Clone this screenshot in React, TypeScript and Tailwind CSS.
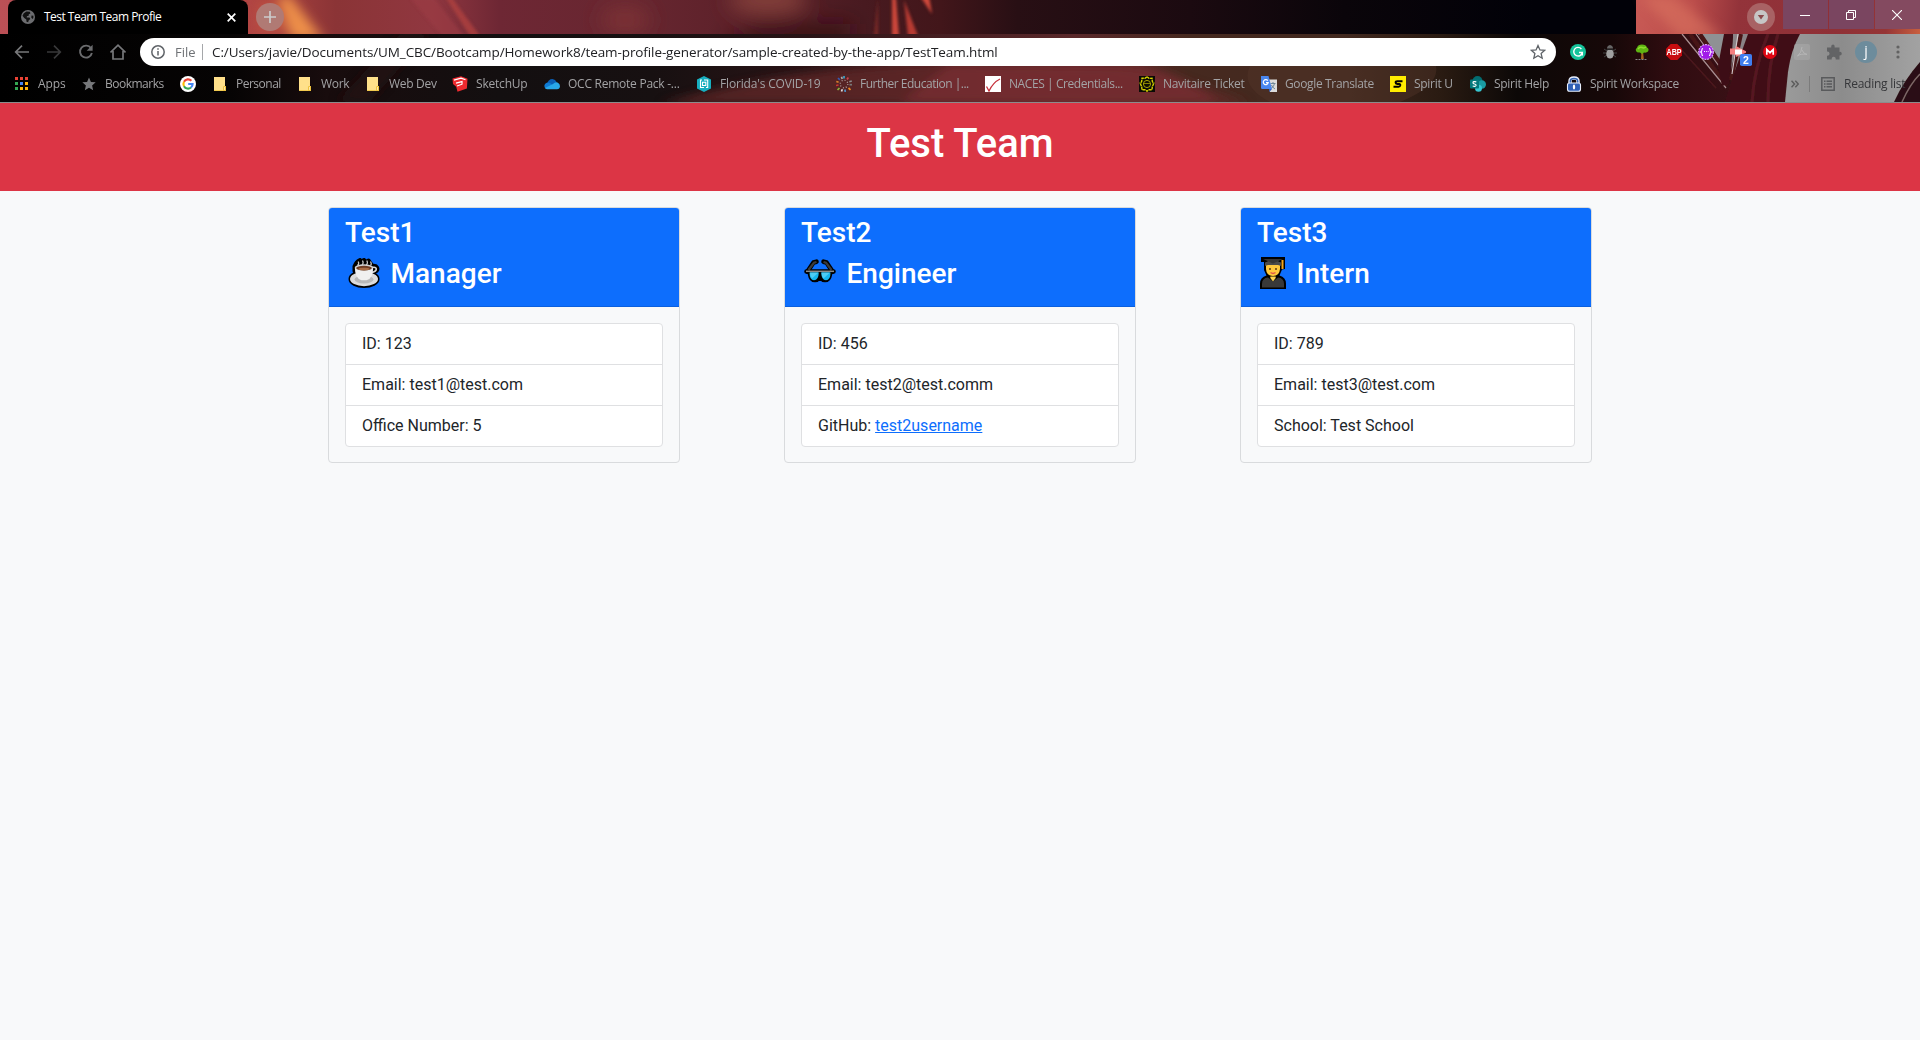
import React from "react";

const UI_FONT = "font-['Open_Sans','Noto_Sans',sans-serif]";

/* ---------- browser theme artwork ---------- */

function StripArt() {
  return (
    <svg className="absolute inset-0" width="1920" height="34" viewBox="0 0 1920 34" preserveAspectRatio="none" aria-hidden="true">
      <defs>
        <linearGradient id="strip" x1="0" x2="1920" y1="0" y2="0" gradientUnits="userSpaceOnUse">
          <stop offset="0" stopColor="#bb5056" />
          <stop offset="0.13" stopColor="#b04442" />
          <stop offset="0.175" stopColor="#8b3436" />
          <stop offset="0.225" stopColor="#903740" />
          <stop offset="0.26" stopColor="#6e2734" />
          <stop offset="0.33" stopColor="#672630" />
          <stop offset="0.4" stopColor="#5a2028" />
          <stop offset="0.45" stopColor="#481a20" />
          <stop offset="0.49" stopColor="#42161a" />
          <stop offset="0.53" stopColor="#280f14" />
          <stop offset="0.62" stopColor="#1b0a10" />
          <stop offset="0.7" stopColor="#0a050a" />
          <stop offset="0.8" stopColor="#010108" />
        </linearGradient>
        <linearGradient id="stripRight" x1="1636" x2="1920" y1="0" y2="34" gradientUnits="userSpaceOnUse">
          <stop offset="0" stopColor="#c85a55" />
          <stop offset="0.2" stopColor="#bb4d4b" />
          <stop offset="0.36" stopColor="#93333a" />
          <stop offset="0.7" stopColor="#8f3036" />
          <stop offset="0.88" stopColor="#953536" />
          <stop offset="1" stopColor="#c9603f" />
        </linearGradient>
        <filter id="b2" x="-50%" y="-50%" width="200%" height="200%"><feGaussianBlur stdDeviation="1.6" /></filter>
        <filter id="b5" x="-50%" y="-100%" width="200%" height="300%"><feGaussianBlur stdDeviation="6" /></filter>
        <filter id="b9" x="-50%" y="-200%" width="200%" height="500%"><feGaussianBlur stdDeviation="10" /></filter>
      </defs>
      <rect width="1920" height="34" fill="url(#strip)" />
      <g filter="url(#b5)">
        <path d="M278-4 290-4 324 40H292Z" fill="#ee9048" />
        <path d="M258 0h22l8 34h-32Z" fill="#c45442" opacity=".7" />
      </g>
      <g filter="url(#b9)">
        <ellipse cx="768" cy="0" rx="40" ry="14" fill="#84403a" />
        <ellipse cx="625" cy="20" rx="24" ry="14" fill="#7c3234" />
        <path d="M720 44l40-20h90v20Z" fill="#371018" />
      </g>
      <g filter="url(#b2)">
        <path d="M410-2h24l30 38h-22Z" fill="#9c3b42" opacity=".6" />
        <path d="M446-2h6l28 38h-10Z" fill="#b5443f" opacity=".7" />
        <path d="M892-2h4l3 38h-7Z" fill="#cc473b" />
        <path d="M904 0l14 36h-10Z" fill="#b83a32" />
        <path d="M920-4h9l3 18Z" fill="#d0483a" />
        <path d="M878-2l-4 38h4Z" fill="#7a2a28" />
      </g>
      <rect x="1636" width="284" height="34" fill="url(#stripRight)" />
      <path d="M1640-4h34l50 42h-44Z" fill="#dc7560" opacity=".6" filter="url(#b5)" />
    </svg>
  );
}

function ToolbarArt() {
  return (
    <svg className="absolute inset-0" width="1920" height="68" viewBox="0 34 1920 68" preserveAspectRatio="none" aria-hidden="true">
      <defs>
        <linearGradient id="bar" x1="0" x2="1920" y1="0" y2="0" gradientUnits="userSpaceOnUse">
          <stop offset="0" stopColor="#000" />
          <stop offset="0.12" stopColor="#060404" />
          <stop offset="0.17" stopColor="#180c0d" />
          <stop offset="0.26" stopColor="#130f10" />
          <stop offset="0.34" stopColor="#171011" />
          <stop offset="0.42" stopColor="#291416" />
          <stop offset="0.48" stopColor="#431d20" />
          <stop offset="0.56" stopColor="#5a282a" />
          <stop offset="0.62" stopColor="#46291f" />
          <stop offset="0.7" stopColor="#42291f" />
          <stop offset="0.75" stopColor="#2a1b12" />
          <stop offset="0.79" stopColor="#0c0807" />
          <stop offset="0.84" stopColor="#170808" />
          <stop offset="0.87" stopColor="#300c10" />
          <stop offset="0.93" stopColor="#40141a" />
        </linearGradient>
        <linearGradient id="silver" x1="1790" x2="1920" y1="0" y2="0" gradientUnits="userSpaceOnUse">
          <stop offset="0" stopColor="#999" />
          <stop offset="0.4" stopColor="#8c8c8c" />
          <stop offset="1" stopColor="#a2a2a2" />
        </linearGradient>
        <filter id="t1" x="-20%" y="-20%" width="140%" height="140%"><feGaussianBlur stdDeviation="0.7" /></filter>
        <filter id="t5" x="-20%" y="-50%" width="140%" height="200%"><feGaussianBlur stdDeviation="5" /></filter>
      </defs>
      <rect y="34" width="1920" height="68" fill="url(#bar)" />
      <g filter="url(#t5)">
        <path d="M660 104q140-40 300-42l160 6q80 14 130 36Z" fill="#63282a" opacity=".75" />
        <path d="M950 64h190q50 14 80 40H900Z" fill="#7a2e31" opacity=".75" />
        <path d="M400 34h30l-60 68h-34Z" fill="#2b0f10" opacity=".5" />
      </g>
      <path d="M1250 66q-10 20 20 36h130q40-16 36-36Z" fill="#54382b" opacity=".4" />
      <g filter="url(#t1)">
        <path d="M1698 34h28l-4 32Z" fill="#8f9194" />
        <path d="M1733 34h16l-13 42-5-2Z" fill="#8a8386" />
        <path d="M1690 34l36 52M1700 34l30 44" stroke="#471318" strokeWidth="4" fill="none" />
        <path d="M1682 34l44 54M1696 34l30 42" stroke="#a88f91" strokeWidth="1.200" fill="none" />
        <path d="M1724 34h9l-4 50-7 2-4-20Z" fill="#3d0f14" />
        <path d="M1741 34l-10 46" stroke="#4a1519" strokeWidth="4" />
        <path d="M1738 34l-6 40" stroke="#d5cccd" strokeWidth="1.100" />
        <path d="M1748 34h52q-14 24-15 68h-60l8-26Z" fill="#401117" />
        <path d="M1768 34q-14 34-16 68M1778 34q-10 30-10 68" stroke="#561920" strokeWidth="3" fill="none" />
        <path d="M1676 44l40 44" stroke="#4c191d" strokeWidth="1.500" />
      </g>
      <path d="M1800 34q-9 16-12 38l-3 30h135V34Z" fill="url(#silver)" filter="url(#t1)" />
      <g filter="url(#t1)">
        <path d="M1894 102q10-22 26-40v40Z" fill="#2a1113" />
        <path d="M1902 102q8-18 18-28" stroke="#7d6668" strokeWidth="1.500" fill="none" />
      </g>
    </svg>
  );
}

/* ---------- small icons ---------- */

const Globe = () => (
  <svg width="14" height="14" viewBox="0 0 14 14">
    <circle cx="7" cy="7" r="7" fill="#6c6d70" />
    <path d="M5.5 1.6l3.4.2.5 1.6-1.7.9.2 1.3-2 .6-.2 1.2h2.8l.8 1.5-1.7 1.6-.4 1.8-1.7-.6-.2-2.3L3.2 8 1.5 5.8Q2.2 3 5.5 1.6Z" fill="#111" />
    <path d="M10.500 5.600l1.900.2q.3 2-.6 3.200l-1.500-1.200Z" fill="#111" />
  </svg>
);

const Star = ({ fill, stroke, size }: { fill: string; stroke: string; size: number }) => (
  <svg width={size} height={size} viewBox="0 0 16 16">
    <path d="M8 1.500l1.950 4.400 4.750.450-3.600 3.150 1.080 4.700L8 11.700l-4.180 2.500 1.080-4.700L1.300 6.350l4.750-.45Z" fill={fill} stroke={stroke} strokeWidth="1.300" strokeLinejoin="miter" />
  </svg>
);

const AppsIcon = () => (
  <svg width="16" height="16" viewBox="0 0 16 16">
    <path d="M1 1h3v3H1zM6 1h3v3H6zM11 1h3v3h-3z" fill="#ea4335" />
    <path d="M1 6h3v3H1zM1 11h3v3H1z" fill="#34a853" />
    <path d="M6 6h3v3H6z" fill="#4285f4" />
    <path d="M11 6h3v3h-3zM6 11h3v3H6zM11 11h3v3h-3z" fill="#fbb50b" />
  </svg>
);

const GoogleIcon = () => (
  <svg width="16" height="16" viewBox="0 0 16 16">
    <circle cx="8" cy="8" r="8" fill="#fff" />
    <g fill="none" strokeWidth="2.100">
      <path d="M11.400 4.800A4.600 4.600 0 0 0 4 5.800" stroke="#ea4335" />
      <path d="M4 5.800a4.600 4.600 0 0 0 0 4.400" stroke="#fbbc05" />
      <path d="M4 10.200a4.600 4.600 0 0 0 7 1.300" stroke="#34a853" />
      <path d="M8.200 8h4.400q0 2.300-1.600 3.500" stroke="#4285f4" />
    </g>
  </svg>
);

const Folder = () => (
  <svg width="16" height="16" viewBox="0 0 16 16">
    <path d="M2 1h11v9h1v5H2Z" fill="#ffe08a" />
    <path d="M11 14.500v-3.200q0-1.300 1.400-1.300H14v5H2v-.7h8.500" fill="#eec23e" />
    <path d="M12 11h1v3h-1z" fill="#ffe9ab" />
  </svg>
);

const SketchUp = () => (
  <svg width="16" height="16" viewBox="0 0 16 16">
    <path d="M.5 2.500L9 .3l6.500 2.500-.6 9.700-9.400 3.200-1.300-5L1 8Z" fill="#ee2a2f" />
    <path d="M2 4.200l7-2 4.500 1.500M4 7.200L10 5.600v2.600l-5 1.800" stroke="#fff" strokeWidth="1.200" fill="none" />
  </svg>
);

const OneDrive = () => (
  <svg width="16" height="16" viewBox="0 0 16 16">
    <path d="M3 8.500Q4 3 8.500 3q3 .2 4.200 3.200L8 10Z" fill="#0a5fb6" />
    <path d="M1 12.200Q-.6 9 1.800 7.200 4 5.800 6.400 7.300L12 12Z" fill="#0f7bd4" />
    <path d="M9 8q2.200-2.200 4.500-1.500Q16 7.500 16 10.200 15.800 13 13 13.200H3Q1.500 13 1 12Z" fill="#28a8ea" />
  </svg>
);

const Covid = () => (
  <svg width="16" height="16" viewBox="0 0 16 16">
    <path d="M8 0l7 3.500v9L8 16l-7-3.500v-9Z" fill="#17aebf" />
    <path d="M6 4H4.500v7.500H8M6.500 6.200v3.300h3.300V6.200ZM8 4h3.700v7.500H10" stroke="#fff" strokeWidth="1.100" fill="none" />
  </svg>
);

const Burst = () => (
  <svg width="16" height="16" viewBox="0 0 16 16" strokeWidth="1.700">
    <path d="M8 0v2.500" stroke="#38a6cf" /><path d="M12.300 1.500l-1.300 1.900" stroke="#c9424a" />
    <path d="M15.800 5l-2.500.8" stroke="#8d8d8d" /><path d="M16 8.700h-2.500" stroke="#777" />
    <path d="M14.500 13.800l-2-1.800" stroke="#ef8b22" /><path d="M9.300 16l-.4-2.500" stroke="#4e93c7" />
    <path d="M5.500 15.500l.8-2.300" stroke="#ddd" /><path d="M1.500 14l2-2" stroke="#8bb43a" />
    <path d="M0 9.500l2.500-.5" stroke="#c33" /><path d="M.3 5.500l2.300.7" stroke="#d9822b" />
    <path d="M2 2l1.900 1.900" stroke="#3558b0" /><path d="M5.500.7l.7 2.300" stroke="#aaa" />
    <circle cx="8" cy="8" r="3.800" stroke="#b5a5a5" strokeDasharray="1 2" strokeWidth="1.200" fill="none" />
  </svg>
);

const Naces = () => (
  <svg width="16" height="16" viewBox="0 0 16 16">
    <path d="M0 0h16v16H0z" fill="#fff" />
    <path d="M1.500 10.500L4 15Q8 6.500 15 3" stroke="#c62f3a" strokeWidth="1.300" fill="none" />
  </svg>
);

const Navitaire = () => (
  <svg width="16" height="16" viewBox="0 0 16 16">
    <path d="M0 0h16v16H0z" fill="#0b0b05" />
    <path d="M8 .8l2 1.600 3-.2.300 3L14.500 8l-1.200 2.700-.3 3-3-.1L8 15.200l-2-1.600-3 .1-.3-3L1.500 8l1.200-2.800.3-3 3 .2Z" fill="none" stroke="#d5cf00" strokeWidth="1.400" strokeDasharray="3 .6" />
    <circle cx="8" cy="8" r="3.600" fill="#0f0e02" stroke="#c9c200" strokeWidth=".8" />
    <path d="M0 7h2.500M13.500 7H16M5 7.500h6" stroke="#857f00" />
  </svg>
);

const Translate = () => (
  <svg width="16" height="16" viewBox="0 0 16 16">
    <path d="M6 3.500h10v12.500H9Z" fill="#dcdcdc" />
    <path d="M9.500 7.500h5M12 6v1.500M10 12.500q3-1.500 3.500-5M10.500 9q1 2.500 3.500 4" stroke="#6f8898" fill="none" />
    <path d="M0 0h7.500L11 13H1.300Q0 13 0 11.700Z" fill="#4a86ee" />
    <path d="M8 13h3l-2.600 3Z" fill="#2d5dc0" />
    <path d="M6.800 4.700A2.500 2.500 0 1 0 7.200 6.700H5" stroke="#fff" strokeWidth="1.200" fill="none" />
  </svg>
);

const SpiritU = () => (
  <span className="flex h-4 w-4 items-center justify-center bg-[#ffec00]">
    <svg width="10" height="10" viewBox="0 0 10 10"><path d="M9.500 2.300H4.300q-1.700 0-1.700 1.100 0 1.400 1.700 1.500h1.900q1.200.1 1.100 1.300-.2 1.500-1.700 1.500H.5" fill="none" stroke="#000" strokeWidth="2" /></svg>
  </span>
);

const SharePoint = () => (
  <svg width="16" height="16" viewBox="0 0 16 16">
    <circle cx="7.500" cy="5" r="5" fill="#036c70" />
    <circle cx="11.800" cy="8.500" r="4.200" fill="#1a9ba1" />
    <circle cx="8.500" cy="12.200" r="3.500" fill="#37c6d0" />
    <rect y="3.500" width="9" height="9" rx="1" fill="#03787c" />
    <path d="M6.300 5.800Q3 5 3 6.700 3 7.600 4.600 8t1.500 1.400Q5.600 10.800 2.700 10" stroke="#fff" strokeWidth="1.200" fill="none" />
  </svg>
);

const LockIcon = () => (
  <svg width="16" height="16" viewBox="0 0 16 16">
    <path d="M4 7V5q0-3 4-3t4 3v2" stroke="#e8eefc" strokeWidth="3.400" fill="none" />
    <path d="M4.300 8V5.200q0-2.700 3.700-2.700t3.700 2.700V8" stroke="#3565b5" strokeWidth="1.500" fill="none" />
    <rect x="1.500" y="7" width="13" height="8.300" rx="2" fill="#2f5fb4" stroke="#e8eefc" strokeWidth="1.100" />
    <path d="M7.200 8.700h1.600l.4 2.300-.4 2.300H7.200L6.800 11Z" fill="#fff" />
  </svg>
);

const bookmarks: { label: string; icon: React.ReactNode; w: string; t: string }[] = [
  { label: "Apps", icon: <AppsIcon />, w: "w-[67px]", t: "tracking-[-0.1px]" },
  { label: "Bookmarks", icon: <Star fill="#77787b" stroke="none" size={16} />, w: "w-[99px]", t: "tracking-[-0.5px]" },
  { label: "", icon: <GoogleIcon />, w: "w-[32px]", t: "" },
  { label: "Personal", icon: <Folder />, w: "w-[85px]", t: "tracking-[-0.5px]" },
  { label: "Work", icon: <Folder />, w: "w-[68px]", t: "tracking-[-0.3px]" },
  { label: "Web Dev", icon: <Folder />, w: "w-[87px]", t: "tracking-[-0.3px]" },
  { label: "SketchUp", icon: <SketchUp />, w: "w-[92px]", t: "tracking-[-0.2px]" },
  { label: "OCC Remote Pack -...", icon: <OneDrive />, w: "w-[152px]", t: "tracking-[-0.25px]" },
  { label: "Florida's COVID-19", icon: <Covid />, w: "w-[140px]", t: "tracking-[-0.17px]" },
  { label: "Further Education |...", icon: <Burst />, w: "w-[149px]", t: "tracking-[-0.5px]" },
  { label: "NACES | Credentials...", icon: <Naces />, w: "w-[154px]", t: "tracking-[-0.42px]" },
  { label: "Navitaire Ticket", icon: <Navitaire />, w: "w-[122px]", t: "tracking-[-0.3px]" },
  { label: "Google Translate", icon: <Translate />, w: "w-[129px]", t: "tracking-[-0.35px]" },
  { label: "Spirit U", icon: <SpiritU />, w: "w-[80px]", t: "tracking-[-0.3px]" },
  { label: "Spirit Help", icon: <SharePoint />, w: "w-[96px]", t: "tracking-[-0.3px]" },
  { label: "Spirit Workspace", icon: <LockIcon />, w: "w-[225px]", t: "tracking-[-0.32px]" },
];

/* ---------- toolbar extensions ---------- */

const extensions: React.ReactNode[] = [
  <svg width="16" height="16" viewBox="0 0 16 16"><circle cx="8" cy="8" r="8" fill="#15c39a" /><path d="M11.400 5A4.300 4.300 0 1 0 12.300 8.500H9M12.300 8.300V11.500" fill="none" stroke="#fff" strokeWidth="1.400" /></svg>,
  <svg width="16" height="16" viewBox="0 0 16 16"><path d="M2 5l3 2M1 9h3M2 13l3-2M14 5l-3 2M15 9h-3M14 13l-3-2" stroke="#444" /><ellipse cx="8" cy="9.800" rx="3.800" ry="4.800" fill="#a0a0a0" /><path d="M5 4.500q0-2.700 3-3.500 3 .8 3 3.500Z" fill="#666" /><path d="M4.500 5.500h7" stroke="#222" /></svg>,
  <svg width="16" height="16" viewBox="0 0 16 16"><path d="M1.500 15.500h11" stroke="#888" strokeDasharray="2 1" /><path d="M7 15l.4-6h1.800l.6 6Z" fill="#a5651f" /><path d="M2 7Q1 5 3 3.800 4 .5 8 .5t5 3Q15.500 5 14 7.500q-1.500 1.500-4 1L8 10 6 8.500Q3 9 2 7Z" fill="#5fb512" /><path d="M4 5q2-2.500 4-1.500t4-.5" stroke="#8fdc2f" fill="none" strokeWidth="1.500" /></svg>,
  <svg width="16" height="16" viewBox="0 0 16 16"><path d="M4.700 0h6.600L16 4.700v6.600L11.300 16H4.700L0 11.300V4.700Z" fill="#c70d10" /><text x="8" y="11" textAnchor="middle" fontFamily="Liberation Sans" fontWeight="700" fontSize="8.500" fill="#fff" textLength="15" lengthAdjust="spacingAndGlyphs">ABP</text></svg>,
  <svg width="16" height="16" viewBox="0 0 16 16"><circle cx="8" cy="8" r="7.400" fill="#a11be8" stroke="#d69cf5" strokeWidth="1.200" strokeDasharray="2 .8" /><path d="M5 4.500Q3.800 4.500 3.900 6T2.500 8q1.500.5 1.400 2t1.100 1.500M11 4.500q1.200 0 1.100 1.500t1.400 2q-1.500.5-1.400 2T11 11.500M6 7.500h1M8 7.500h.8M9.800 7.500h.8" stroke="#fff" fill="none" strokeWidth="1.100" /></svg>,
  <svg className="overflow-visible" width="32" height="24" viewBox="0 0 32 24"><path d="M8 8.500h6V6l10 5.200v1.500L14 17v-2.500H8Z" fill="#f57f7f" /><path d="M13 9.500h7v5h-7z" fill="#fff" /><rect x="18" y="14" width="12" height="12" rx="1.800" fill="#3f7ef0" /><text x="24" y="24" textAnchor="middle" fontFamily="Liberation Sans" fontWeight="700" fontSize="10.500" fill="#fff">2</text></svg>,
  <svg width="14" height="14" viewBox="0 0 14 14"><circle cx="7" cy="7" r="7" fill="#e00613" /><path d="M3.800 9.800V4.500L7 7.700l3.200-3.200v5.300" fill="none" stroke="#fff" strokeWidth="1.700" /></svg>,
  <svg width="16" height="16" viewBox="0 0 16 16"><rect width="16" height="16" rx="2" fill="#a8a8a8" opacity=".6" /><path d="M3.500 12q4-3 4.500-9M8 6q1.500 4 5 4.500M3.500 12Q6 9.500 13 10.300" stroke="#b5b5b5" fill="none" /></svg>,
  <svg width="16" height="16" viewBox="0 0 16 16"><path d="M1 3.500h4.200Q4.700 1 6.800.6 9 .8 8.600 3.500h4.900v4.400q2.200-.3 2.300 1.800-.1 2-2.300 1.800v4H9.700q.2-2.800-2-2.800t-2 2.800H1v-3.800q2.500.2 2.600-2Q3.500 7.400 1 7.600Z" fill="#626365" /></svg>,
  <span className="flex h-[22px] w-[22px] items-center justify-center rounded-full bg-[#6d8c9c] pb-0.5 text-[14px] leading-none text-white">j</span>,
  <svg width="4" height="14" viewBox="0 0 4 14" fill="#626262"><circle cx="2" cy="2" r="1.600" /><circle cx="2" cy="7" r="1.600" /><circle cx="2" cy="12" r="1.600" /></svg>,
];

const navIcons: React.ReactNode[] = [
  <svg width="16" height="16" viewBox="0 0 16 16" fill="none" stroke="#77787a" strokeWidth="1.700"><path d="M15 8H2M8 1.700L1.700 8 8 14.300" /></svg>,
  <svg width="16" height="16" viewBox="0 0 16 16" fill="none" stroke="#39393a" strokeWidth="1.700"><path d="M1 8h13M8 1.700L14.300 8 8 14.300" /></svg>,
  <svg width="16" height="16" viewBox="0 0 16 16" fill="none" stroke="#6b6c6e" strokeWidth="1.900"><path d="M13 4.200A6 6 0 1 0 13.900 9" /><path d="M14.600.8v6H8.600Z" fill="#6b6c6e" stroke="none" /></svg>,
  <svg width="16" height="16" viewBox="0 0 16 16" fill="none" stroke="#77787a" strokeWidth="1.700"><path d="M.5 8.500L8 1.200l7.500 7.300M3 7v8h10V7" /></svg>,
];

function BrowserChrome() {
  return (
    <header className={`${UI_FONT} border-b border-[#8c8c8c]`}>
      <div className="relative h-[34px] overflow-hidden">
        <StripArt />
        <div className="relative flex h-full items-start pl-2">
          <div className="flex h-[34px] w-60 items-center rounded-t-lg bg-black pl-[13px] pr-3 text-white">
            <Globe />
            <span className="ml-[9px] whitespace-nowrap text-[12px] tracking-[-0.52px]">Test Team Team Profie</span>
            <svg className="ml-auto" width="9" height="9" viewBox="0 0 9 9" stroke="#fff" strokeWidth="1.700"><path d="M.7.7l7.600 7.600M8.300.7L.7 8.300" /></svg>
          </div>
          <div className="ml-2 mt-[3px] flex h-7 w-7 items-center justify-center rounded-full bg-[#b07a74]">
            <svg width="12" height="12" viewBox="0 0 12 12" stroke="#ccc" strokeWidth="1.700"><path d="M6 0v12M0 6h12" /></svg>
          </div>
          <div className="ml-auto mr-2 mt-[3px] flex h-7 w-7 items-center justify-center rounded-full bg-[#a86264]">
            <svg width="14" height="14" viewBox="0 0 14 14"><circle cx="7" cy="7" r="7" fill="#c6c6c6" /><path d="M3.800 5h6.400L7 9.500Z" fill="#8a4a4c" /></svg>
          </div>
          <div className="flex h-[29px] gap-px">
            <div className="flex w-[45px] items-center justify-center bg-[#7a4560] pr-px">
              <svg width="10" height="10"><path d="M0 5.500h10" stroke="#fff" /></svg>
            </div>
            <div className="flex w-[45px] items-center justify-center bg-[#7a4560] pr-px">
              <svg width="10" height="10" viewBox="0 0 10 10" fill="none" stroke="#fff"><path d="M.5 2.500h7v7h-7zM2.500 2.500v-2h7v7h-2" /></svg>
            </div>
            <div className="flex w-[45px] items-center justify-center bg-[#844a60] pr-px">
              <svg width="10" height="10" viewBox="0 0 10 10" stroke="#fff" strokeWidth="1.100"><path d="M0 0l10 10M10 0L0 10" /></svg>
            </div>
          </div>
        </div>
      </div>
      <div className="relative h-[68px] overflow-hidden">
        <ToolbarArt />
        <div className="relative flex h-9 items-center pl-1.5">
          {navIcons.map((icon, i) => (
            <div key={i} className="flex w-8 items-center justify-center">{icon}</div>
          ))}
          <div className="ml-1.5 flex h-7 w-[1416px] items-center rounded-full bg-white pl-[11px] pr-2.5 whitespace-nowrap">
            <svg width="14" height="14" viewBox="0 0 14 14" fill="none" stroke="#5f6368" strokeWidth="1.500"><circle cx="7" cy="7" r="6.200" /><path d="M7 6v4.500M7 3.300v1.500" /></svg>
            <span className="ml-2.5 w-[27px] pt-px text-[13px] text-[#6f7276]">File</span>
            <span className="h-4 w-px bg-[#a5a7aa]" />
            <span className="ml-[9px] pt-px text-[13.5px] tracking-[-0.1px] text-[#202124]">
              C:/Users/javie/Documents/UM_CBC/Bootcamp/Homework8/team-profile-generator/sample-created-by-the-app/TestTeam.html
            </span>
            <span className="ml-auto"><Star fill="none" stroke="#5f6368" size={16} /></span>
          </div>
          <div className="ml-1.5 flex">
            {extensions.map((icon, i) => (
              <div key={i} className="flex h-6 w-8 items-center justify-center">{icon}</div>
            ))}
          </div>
        </div>
        <div className="relative flex h-8 items-center pb-1 pl-3.5 text-[12px] whitespace-nowrap text-[#a3a3a5]">
          {bookmarks.map((b, i) => (
            <div key={i} className={`flex shrink-0 items-center gap-2 ${b.w}`}>
              {b.icon}
              <span className={b.t}>{b.label}</span>
            </div>
          ))}
          <svg width="8" height="8" viewBox="0 0 8 8" fill="none" stroke="#5c5c5c" strokeWidth="1.500"><path d="M.5.800L3.500 4l-3 3.200M4.300.800L7.300 4l-3 3.200" /></svg>
          <span className="ml-[10px] h-4 w-px bg-[#7b7b7b]" />
          <svg className="ml-[11px]" width="14" height="14" viewBox="0 0 14 14" fill="none" stroke="#595a5c" strokeWidth="1.500"><path d="M.8.800h12.400v12.400H.8zM3 4.200h1.500M5.500 4.200H11M3 7h1.500M5.500 7H11M3 9.800h1.500M5.500 9.800H11" /></svg>
          <span className="ml-[9px] tracking-[-0.25px] text-[#36373a]">Reading list</span>
        </div>
      </div>
    </header>
  );
}

/* ---------- role pictograms ---------- */

const CoffeeIcon = () => (
  <svg width="32" height="30" viewBox="0 0 32 30">
    <g stroke="#000" strokeWidth="4" strokeLinejoin="round" fill="#000">
      <ellipse cx="16" cy="21" rx="13.500" ry="7" />
      <path d="M6.500 8.500Q8 4 12 2l1 2 3-2 1.500 2 3-1.500 3.500 5 4 .8q2.500 2 .5 4.700L24 15q-1 6-8 6t-9.500-8Z" />
    </g>
    <ellipse cx="16" cy="21" rx="14" ry="7.200" fill="#dcdcdc" />
    <ellipse cx="16" cy="21.500" rx="9.500" ry="4" fill="#b9b9b9" />
    <path d="M24 9.500q4-.8 4.300 1.300.1 3-5 3.700" fill="none" stroke="#d8d8d8" strokeWidth="1.600" />
    <path d="M6.800 9.500h18.400Q25 21 18.500 22.300h-5Q7 20.500 6.800 9.500Z" fill="#f0f0f0" />
    <ellipse cx="16" cy="9.500" rx="9.200" ry="3.300" fill="#d2d2d2" />
    <ellipse cx="16" cy="10.100" rx="7.800" ry="2.300" fill="#6d3b22" />
    <ellipse cx="16" cy="11" rx="5.500" ry="1.200" fill="#a96b43" />
    <path d="M9.500 7.500q2-1.800.7-4M14 7q2-1.800.5-4.500M18.300 7q2-1.800.5-4.500M22.500 7.500q1.600-1.400 0-4" stroke="#c9c9c9" strokeWidth="1.200" fill="none" />
  </svg>
);

const GlassesIcon = () => (
  <svg width="32" height="30" viewBox="0 0 32 30">
    <g fill="none" stroke="#000" strokeLinecap="round" strokeLinejoin="round">
      <path d="M3.500 13.500L9.500 4.500l3-.8M28.500 13.500L22.500 4.500l-3-.8" strokeWidth="4.600" />
      <path d="M2.500 13.500h27M6 16q1 6 5 6t5-6q1 6 5 6t5-6" strokeWidth="4.600" />
    </g>
    <path d="M4.500 12L10 4.800l2.500-.8M27.500 12L22 4.800 19.500 4" stroke="#3b3b3b" strokeWidth="2.200" fill="none" />
    <path d="M2 13.300h28" stroke="#8b8b8b" strokeWidth="1.500" />
    <path d="M5.500 14.500h9.300q-.3 7.800-4.800 7.800t-4.500-7.800ZM17.200 14.500h9.300q0 7.800-4.500 7.800t-4.800-7.800Z" fill="#15b6ee" />
    <path d="M6 14.500h8.500L8 20.500Q6 18.500 6 14.500ZM17.500 14.500H26L19.500 20.500q-2-2-2-6Z" fill="#4ccdf5" />
  </svg>
);

const GraduateIcon = () => (
  <svg width="26" height="32" viewBox="0 0 26 32">
    <path d="M1 0h24v12l-3 .5-2.500 6q6.500 2 6.500 8V32H0v-5.500q0-6 6.500-8L4 13V5H1Z" fill="#000" />
    <path d="M6 8h14v4q-.5 7-7 7t-7-7Z" fill="#ffc83d" />
    <path d="M5 9V5.500q8-4.500 16 0V9L18 8H8Z" fill="#4a4a4a" />
    <path d="M3 2h20L13 6.500Z" fill="#353535" />
    <path d="M22.500 3v9" stroke="#f3a51b" strokeWidth="2" />
    <circle cx="10" cy="12" r="1" fill="#5d3a11" /><circle cx="16" cy="12" r="1" fill="#5d3a11" />
    <path d="M10.500 15.500q2.500 1.800 5 0" stroke="#e0564c" strokeWidth="1.500" fill="none" />
    <path d="M2 30.500V27q0-6 6-6.500l5 4 5-4q6 .5 6 6.500v3.500Z" fill="#393939" />
    <path d="M10.300 19.500h5.400v1.500L13 24.500 10.300 21Z" fill="#ffd34e" />
  </svg>
);

interface Member {
  name: string;
  role: string;
  icon: React.ReactNode;
  rows: React.ReactNode[];
}

const team: Member[] = [
  { name: "Test1", role: "Manager", icon: <CoffeeIcon />, rows: ["ID: 123", "Email: test1@test.com", "Office Number: 5"] },
  {
    name: "Test2",
    role: "Engineer",
    icon: <GlassesIcon />,
    rows: ["ID: 456", "Email: test2@test.comm", <>GitHub: <a href="#" className="text-[#0d6efd] underline">test2username</a></>],
  },
  { name: "Test3", role: "Intern", icon: <GraduateIcon />, rows: ["ID: 789", "Email: test3@test.com", "School: Test School"] },
];

function MemberCard({ name, role, icon, rows }: Member) {
  return (
    <section className="h-64 w-[352px] rounded border border-[#d9dbdd]">
      <div className="h-[99px] rounded-t-[3px] border-b border-[#0b60de] bg-[#0d6efd] px-4 pt-2 text-[28px] font-medium text-white">
        <h3 className="leading-[33px]">{name}</h3>
        <h3 className="mt-2 flex h-[33px] items-center leading-[33px]">
          <span className="mr-[10.5px] ml-[3px] -mt-0.5">{icon}</span>
          {role}
        </h3>
      </div>
      <ul className="mx-4 mt-4 rounded border border-[#dfe0e2] bg-white">
        {rows.map((row, i) => (
          <li key={i} className="border-b border-[#dfe0e2] px-4 py-2 leading-6 last:border-b-0">{row}</li>
        ))}
      </ul>
    </section>
  );
}

export default function App() {
  return (
    <div className="h-[1040px] w-[1920px] overflow-hidden bg-[#f8f9fa]">
      <BrowserChrome />
      <div className="font-[Roboto,sans-serif] text-base text-[#212529]">
        <div className="h-[88px] bg-[#dc3545] pt-[17px] text-center">
          <h1 className="text-[40px] leading-[48px] font-medium text-white">Test Team</h1>
        </div>
        <main className="mt-4 flex justify-center gap-[104px]">
          {team.map((m) => (
            <MemberCard key={m.name} {...m} />
          ))}
        </main>
      </div>
    </div>
  );
}
